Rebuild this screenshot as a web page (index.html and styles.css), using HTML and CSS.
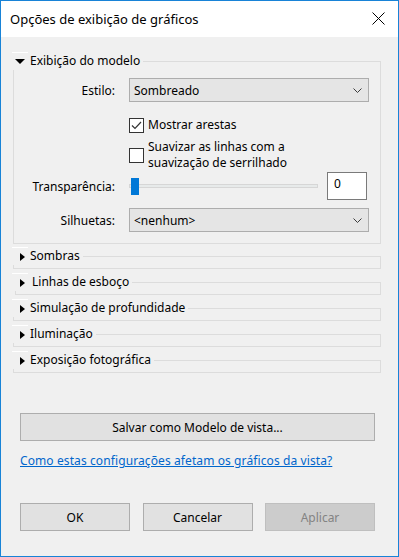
FILE: index.html
```html
<!DOCTYPE html>
<html lang="pt">

<head>
  <meta charset="UTF-8" />
  <title>Opções de exibição de gráficos</title>
  <link rel="stylesheet" href="styles.css">
</head>

<body>
  <div class="window">
    <div class="titlebar">
      <span class="title">Opções de exibição de gráficos</span>
      <span class="close">
        <svg width="13" height="13" viewBox="0 0 13 13">
          <path d="M0.5 0.5L12.5 12.5M12.5 0.5L0.5 12.5" stroke="#000" stroke-width="1" fill="none" />
        </svg>
      </span>
    </div>

    <div class="content">
      <!-- expanded group -->
      <div class="group open">
        <div class="group-head">
          <span class="twisty"><span class="tri-down"></span></span>
          <span class="group-title">Exibição do modelo</span>
          <span class="rule"></span>
        </div>
        <div class="group-body">
          <div class="row first">
            <span class="lbl">Estilo:</span>
            <div class="combo">
              <span>Sombreado</span>
              <svg width="9" height="5" viewBox="0 0 9 5">
                <path d="M0.5 0.5L4.5 4.5L8.5 0.5" fill="none" stroke="#3c3c3c" stroke-width="1" />
              </svg>
            </div>
          </div>
          <div class="check one">
            <span class="box">
              <svg width="13" height="13" viewBox="0 0 13 13">
                <path d="M2 6.5L5 9.5L11 3" fill="none" stroke="#333" stroke-width="1.2" />
              </svg>
            </span>
            <span class="check-text">Mostrar arestas</span>
          </div>
          <div class="check two">
            <span class="box"></span>
            <span class="check-text">Suavizar as linhas com a<br>suavização de serrilhado</span>
          </div>
          <div class="row slider-row">
            <span class="lbl">Transparência:</span>
            <div class="slider-wrap">
              <div class="slider">
                <span class="track"></span>
                <span class="thumb"></span>
              </div>
              <div class="num">0</div>
            </div>
          </div>
          <div class="row last">
            <span class="lbl">Silhuetas:</span>
            <div class="combo">
              <span>&lt;nenhum&gt;</span>
              <svg width="9" height="5" viewBox="0 0 9 5">
                <path d="M0.5 0.5L4.5 4.5L8.5 0.5" fill="none" stroke="#3c3c3c" stroke-width="1" />
              </svg>
            </div>
          </div>
        </div>
      </div>

      <!-- collapsed groups -->
      <div class="group">
        <div class="group-head">
          <span class="twisty"><span class="tri-right"></span></span>
          <span class="group-title">Sombras</span>
          <span class="rule"></span>
        </div>
        <div class="group-body"></div>
      </div>
      <div class="group shifted">
        <div class="group-head">
          <span class="twisty"><span class="tri-right"></span></span>
          <span class="group-title">Linhas de esboço</span>
          <span class="rule"></span>
        </div>
        <div class="group-body"></div>
      </div>
      <div class="group">
        <div class="group-head">
          <span class="twisty"><span class="tri-right"></span></span>
          <span class="group-title">Simulação de profundidade</span>
          <span class="rule"></span>
        </div>
        <div class="group-body"></div>
      </div>
      <div class="group">
        <div class="group-head">
          <span class="twisty"><span class="tri-right"></span></span>
          <span class="group-title">Iluminação</span>
          <span class="rule"></span>
        </div>
        <div class="group-body"></div>
      </div>
      <div class="group">
        <div class="group-head">
          <span class="twisty"><span class="tri-right"></span></span>
          <span class="group-title">Exposição fotográfica</span>
          <span class="rule"></span>
        </div>
        <div class="group-body"></div>
      </div>

      <div class="btn save">Salvar como Modelo de vista...</div>
      <a class="help" href="#">Como estas configurações afetam os gráficos da vista?</a>

      <div class="actions">
        <div class="btn">OK</div>
        <div class="btn">Cancelar</div>
        <div class="btn disabled">Aplicar</div>
      </div>
    </div>
  </div>
</body>

</html>
```

FILE: styles.css
```css
html,
body {
  margin: 0;
  padding: 0;
}

body {
  font-family: "Noto Sans", sans-serif;
  font-size: 12px;
  color: #000;
  background: #fff;
}

.window {
  width: 399px;
  height: 557px;
  box-sizing: border-box;
  border: 1px solid #1883d7;
  background: #f0f0f0;
  display: flex;
  flex-direction: column;
}

.titlebar {
  height: 36px;
  flex-shrink: 0;
  background: #fff;
  display: flex;
  align-items: center;
  justify-content: space-between;
  padding-left: 9px;
}

.title {
  font-size: 13px;
  padding-bottom: 1px;
}

.close {
  width: 40px;
  height: 36px;
  display: flex;
  align-items: center;
  justify-content: center;
  padding-bottom: 1px;
  box-sizing: border-box;
}

.content {
  padding: 15px 17px 0 11px;
  display: flex;
  flex-direction: column;
}

/* group boxes */
.group {
  margin-bottom: 4px;
}

.group.open {
  margin-bottom: 3px;
}

.group-head {
  display: flex;
  height: 18px;
  align-items: center;
}

.twisty {
  width: 16px;
  height: 18px;
  box-sizing: border-box;
  border-top: 1px solid #fff;
  display: flex;
  align-items: center;
  justify-content: center;
  flex-shrink: 0;
}

.tri-down {
  width: 0;
  height: 0;
  border-left: 5px solid transparent;
  border-right: 5px solid transparent;
  border-top: 5px solid #000;
  margin-top: -1px;
}

.tri-right {
  width: 0;
  height: 0;
  border-top: 4px solid transparent;
  border-bottom: 4px solid transparent;
  border-left: 5px solid #000;
  margin-left: 4px;
}

.group-title {
  margin-left: 2px;
  line-height: 16px;
  white-space: nowrap;
}

.shifted .group-title {
  margin-left: 4px;
}

.rule {
  flex: 1;
  align-self: flex-end;
  height: 9px;
  box-sizing: border-box;
  margin-left: 3px;
  border-top: 1px solid #dcdcdc;
  border-right: 1px solid #dcdcdc;
}

.group-body {
  margin-left: 1px;
  height: 4px;
  box-sizing: border-box;
  border: 1px solid #dcdcdc;
  border-top: none;
}

.shifted .group-body {
  margin-left: 3px;
}

.open .group-body {
  height: 174px;
  padding-top: 8px;
}

/* form rows */
.row {
  display: flex;
  align-items: center;
}

.lbl {
  width: 101px;
  margin-right: 14px;
  text-align: right;
  white-space: nowrap;
}

.combo {
  width: 240px;
  height: 24px;
  box-sizing: border-box;
  border: 1px solid #adadad;
  background: #e5e5e5;
  display: flex;
  align-items: center;
  justify-content: space-between;
  padding: 0 6px 0 4px;
}

.check {
  display: flex;
  align-items: center;
  margin-left: 115px;
  line-height: 16px;
}

.check.one {
  margin-top: 15px;
}

.check.two {
  margin-top: 6px;
}

.box {
  width: 15px;
  height: 15px;
  box-sizing: border-box;
  border: 1px solid #333;
  background: #fff;
  margin-right: 4px;
  flex-shrink: 0;
  display: flex;
}

.slider-row {
  margin-top: 1px;
}

.slider-wrap {
  width: 240px;
  display: flex;
  align-items: center;
}

.slider {
  flex: 1;
  height: 17px;
  position: relative;
  display: flex;
  align-items: center;
}

.track {
  flex: 1;
  height: 4px;
  box-sizing: border-box;
  background: #e7eaea;
  border: 1px solid #d6d6d6;
}

.thumb {
  position: absolute;
  left: 2px;
  top: 0;
  width: 8px;
  height: 17px;
  background: #0078d7;
}

.num {
  width: 40px;
  height: 28px;
  box-sizing: border-box;
  margin: 0 2px 0 9px;
  border: 1px solid #7a7a7a;
  background: #fff;
  padding: 3px 6px;
  line-height: 16px;
}

.row.last {
  margin-top: 8px;
}

/* buttons and link */
.btn {
  height: 28px;
  box-sizing: border-box;
  border: 1px solid #adadad;
  background: #e1e1e1;
  display: flex;
  align-items: center;
  justify-content: center;
}

.save {
  width: 355px;
  margin: 36px 0 0 8px;
}

.help {
  margin: 12px 0 0 8px;
  line-height: 16px;
  color: #0066cc;
  text-decoration: underline;
  letter-spacing: 0.1px;
  align-self: flex-start;
}

.actions {
  width: 355px;
  margin: 34px 0 0 8px;
  display: flex;
  justify-content: space-between;
}

.actions .btn {
  width: 110px;
}

.btn.disabled {
  background: #cccccc;
  border-color: #bfbfbf;
  color: #838383;
}
```
